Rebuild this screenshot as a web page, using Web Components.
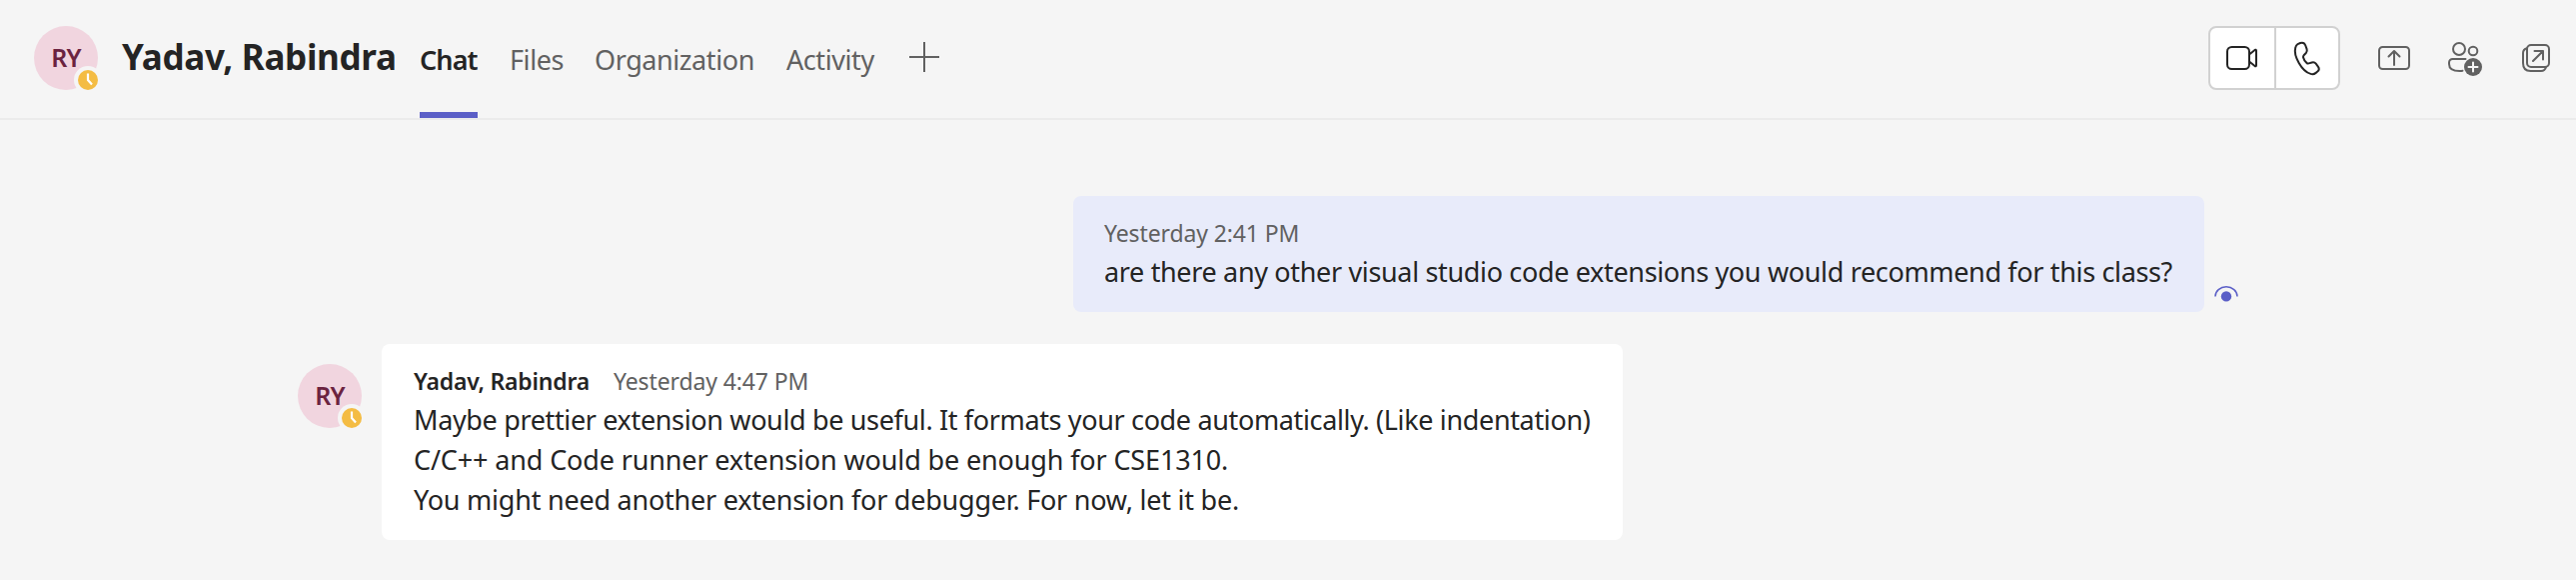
<!DOCTYPE html>
<html lang="en"><head><meta charset="utf-8"><title>Chat</title>
<style>
body{margin:0;background:#f5f5f5;font-family:"Noto Sans","Open Sans",sans-serif;color:#242424}
</style></head><body>
<script>
const define = (name, html) => customElements.define(name, class extends HTMLElement {
  constructor(){ super(); this.attachShadow({mode:'open'}).innerHTML = html; }
});

define('user-avatar', `<style>
:host{display:block;position:relative;width:64px;height:64px;flex:none}
.disc{width:64px;height:64px;border-radius:50%;background:#f1d5df;color:#6b2340;font-size:25px;font-weight:600;line-height:62px;text-align:center;letter-spacing:-.9px}
svg{position:absolute;left:40px;top:40px}
</style><div class="disc"><slot></slot></div>
<svg width="28" height="28" viewBox="0 0 28 28"><circle cx="14" cy="14" r="14" fill="#f5f5f5"/><circle cx="14" cy="14" r="10" fill="#f4bc43"/><path d="M14 7.500v6.500l4 4.500" fill="none" stroke="#fff" stroke-width="2.200"/></svg>`);

define('nav-tab', `<style>
:host{display:block;box-sizing:border-box;height:118px;padding-top:40px;font-size:27px;line-height:40px;letter-spacing:-.42px;color:#616161;white-space:nowrap;border-bottom:6px solid transparent}
:host([selected]){color:#242424;border-color:#5b5fc7;font-weight:600;letter-spacing:-.9px}
</style><slot></slot>`);

define('chat-header', `<style>
:host{display:flex;box-sizing:border-box;height:120px;border-bottom:2px solid #ebebeb;padding:0 26px 0 34px;align-items:flex-start}
user-avatar{margin-top:26px}
h1{margin:33px 0 0 24px;width:298px;font-size:35px;line-height:48px;font-weight:700;letter-spacing:-.3px;white-space:nowrap}
nav{display:grid;grid-template-columns:58px 53px 160px 90px;column-gap:32px}
.plus{margin:42px 0 0 33px}
.tools{margin-left:auto;display:flex;align-items:flex-start;color:#616161}
.calls{box-sizing:border-box;width:132px;height:64px;margin-top:26px;border:2px solid #d1d1d1;border-radius:8px;background:#fff;display:grid;grid-template-columns:64px 1fr;color:#242424}
.cell+.cell{border-left:2px solid #d1d1d1}
svg{display:block;fill:none;stroke:currentColor;stroke-width:2;stroke-linecap:round;stroke-linejoin:round}
.share{margin:42px 0 0 38px}.people{margin:38px 0 0 36px}.pop{margin:42px 0 0 40px}
</style>
<user-avatar>RY</user-avatar><h1>Yadav, Rabindra</h1>
<nav><nav-tab selected>Chat</nav-tab><nav-tab>Files</nav-tab><nav-tab>Organization</nav-tab><nav-tab>Activity</nav-tab></nav>
<svg class="plus" width="30" height="30" style="color:#616161;stroke-linecap:butt"><path d="M15 0v30M0 15h30"/></svg>
<div class="tools">
<div class="calls">
<div class="cell"><svg width="64" height="60"><rect x="17" y="19" width="22" height="22" rx="4.5"/><path d="M39 26.5l5.6-4.600c.7-.5 1.400-.2 1.400.6v15c0 .8-.7 1.100-1.400.6L39 33.500"/></svg></div>
<div class="cell"><svg width="62" height="60" viewBox="0 0 62 60"><path d="M22 16.300l2.600-1.100c2.500-.8 4.300.1 5.200 2.500l1.300 3.600c.5 1.500.2 2.800-.8 3.900l-2.200 2.300c-.5.6-.7 1.200-.6 2 .5 2.300 2.200 4.600 3.700 5.800.6.5 1.200.5 1.900.3l3.100-.9c1.600-.5 3-.1 4 1.200l2 2.600c1.500 2 1.300 3.900-.4 5.300l-1.600 1.300c-1.500 1.200-3.400 1.600-5.200 1-4.500-1.400-8.500-5.200-11.800-11-3.300-5.700-4.600-11-3.500-15.200.4-1.600 1.100-2.900 2.300-3.600z" transform="translate(-.5 -.2)"/></svg></div>
</div>
<svg class="share" width="32" height="32"><rect x="1" y="5" width="30" height="22" rx="3.5"/><path d="M16 23V9.500M10.500 14.500L16 9l5.500 5.500"/></svg>
<svg class="people" width="36" height="40"><circle cx="13" cy="11" r="6"/><circle cx="27" cy="13" r="4.300"/><path d="M19.500 21H6.500A3.500 3.500 0 0 0 3 24.500V26c0 4.800 4 7 10.500 7 1 0 2 0 3-.2"/><circle cx="27" cy="29" r="9" fill="#616161" stroke="none"/><path d="M27 24.500v9M22.500 29h9" stroke="#f5f5f5"/></svg>
<svg class="pop" width="28" height="32"><rect x="5" y="3" width="22" height="22" rx="4"/><path d="M5 6.300C2.500 7 1 8.500 1 11v10c0 5.500 3 8 7.500 8H19c2.500 0 4.300-1.300 5-4M11 19l10-10M12.500 9H21v8.500"/></svg>
</div>`);

define('chat-message', `<style>
:host{display:flex;align-items:flex-start}
.bubble{box-sizing:border-box;height:var(--h);width:var(--w);background:var(--bg);border-radius:8px;padding:24px 32px 20px var(--pl,32px)}
.meta{display:flex;height:32px;font-size:23px;line-height:26px;white-space:nowrap}
.body{font-size:27px;line-height:40px;white-space:nowrap}
</style><slot name="avatar"></slot><div class="bubble"><div class="meta"><slot name="meta"></slot></div><div class="body"><slot></slot></div></div><slot name="after"></slot>`);

define('read-receipt', `<style>:host{display:block;margin:88px 0 0 8px}svg{display:block}</style>
<svg width="28" height="20"><path d="M3 12.500a11 9.700 0 0 1 22 0" fill="none" stroke="#5b5fc7" stroke-width="1.500"/><circle cx="14" cy="12.400" r="5.200" fill="#5b5fc7"/></svg>`);

define('text-line', `<style>:host{display:block}</style><slot></slot>`);

define('chat-page', `<style>
:host{display:flex;flex-direction:column;height:580px;overflow:hidden}
.mine{--bg:#e8ebfa;--w:1132px;--h:116px;--pl:31px;margin:76px 0 0 1074px}
.q{letter-spacing:-.345px}
.theirs{--bg:#fff;--w:1242px;--h:196px;margin:32px 0 0 298px}
.theirs user-avatar{margin:20px 20px 0 0}
.time{color:#616161;letter-spacing:-.12px}
.name{font-weight:600;letter-spacing:-.22px;width:200px}
.l1{letter-spacing:-.355px}.l2{letter-spacing:-.14px}.l3{letter-spacing:-.23px}
</style>
<chat-header></chat-header>
<chat-message class="mine"><span slot="meta" class="time">Yesterday 2:41 PM</span><text-line class="q">are there any other visual studio code extensions you would recommend for this class?</text-line><read-receipt slot="after"></read-receipt></chat-message>
<chat-message class="theirs"><user-avatar slot="avatar">RY</user-avatar><span slot="meta" class="name">Yadav, Rabindra</span><span slot="meta" class="time">Yesterday 4:47 PM</span>
<text-line class="l1">Maybe prettier extension would be useful. It formats your code automatically. (Like indentation)</text-line>
<text-line class="l2">C/C++ and Code runner extension would be enough for CSE1310.</text-line>
<text-line class="l3">You might need another extension for debugger. For now, let it be.</text-line></chat-message>`);
</script>
<chat-page></chat-page>
</body></html>
